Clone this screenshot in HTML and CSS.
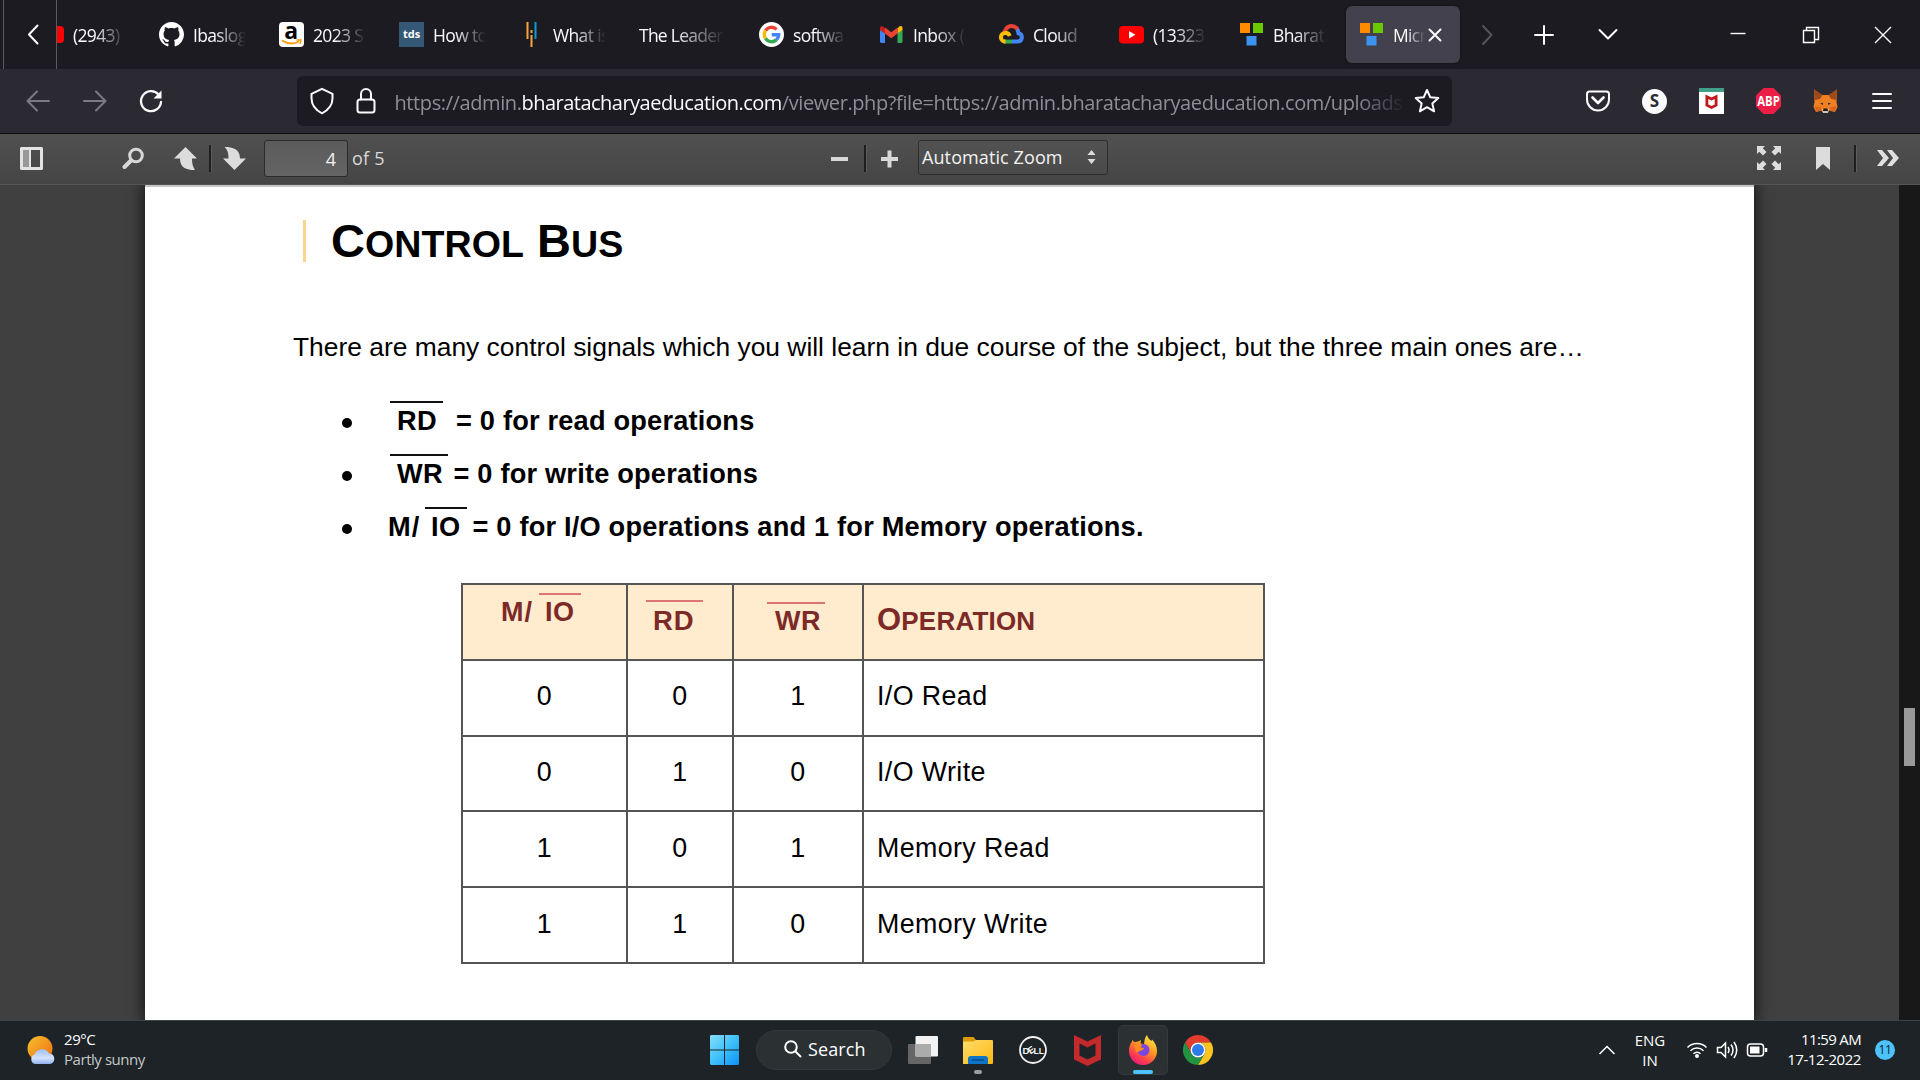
FILE: index.html
```html
<!DOCTYPE html>
<html lang="en">
<head>
<meta charset="utf-8">
<title>Control Bus</title>
<link rel="stylesheet" href="styles.css">
</head>
<body>
<header class="tabstrip">
  <div class="scroll-left"><svg width="14" height="22" viewBox="0 0 14 22" class="ln"><path d="M11.500 1.500 3 10.500 11.500 19.500"/></svg></div>
  <div class="tabs">
    <div class="tab"><svg class="fav" viewBox="0 0 25 25"><rect y="4" width="25" height="17" rx="4" fill="#f00"/></svg><span class="label">(2943)</span></div>
    <div class="tab"><svg class="fav" viewBox="0 0 16 16"><path fill="#fff" d="M8 0C3.580 0 0 3.580 0 8c0 3.540 2.290 6.530 5.470 7.590.4.070.55-.17.55-.38 0-.19-.01-.82-.01-1.490-2.010.37-2.530-.49-2.690-.94-.09-.23-.48-.94-.82-1.130-.28-.15-.68-.52-.01-.53.63-.01 1.080.58 1.230.82.72 1.210 1.870.87 2.330.66.070-.52.28-.87.51-1.070-1.780-.2-3.640-.89-3.640-3.950 0-.87.31-1.590.82-2.150-.08-.2-.36-1.020.08-2.120 0 0 .67-.21 2.200.82.64-.18 1.320-.27 2-.27s1.360.09 2 .27c1.530-1.040 2.200-.82 2.200-.82.44 1.100.16 1.920.08 2.120.51.56.82 1.270.82 2.150 0 3.070-1.870 3.750-3.650 3.950.29.25.54.73.54 1.480 0 1.070-.01 1.930-.01 2.200 0 .21.15.46.55.38A8.010 8.010 0 0 0 16 8c0-4.420-3.580-8-8-8z"/></svg><span class="label">Ibaslog</span></div>
    <div class="tab"><svg class="fav" viewBox="0 0 25 25"><rect width="25" height="25" rx="4" fill="#fff"/><text x="5.200" y="16.500" class="amz">a</text><path d="M3 18.500q8.500 5.500 17 1" fill="none" stroke="#f90" stroke-width="1.800"/><path d="M17.500 18h4.500l-1 4" fill="none" stroke="#f90" stroke-width="1.400"/></svg><span class="label">2023 S</span></div>
    <div class="tab"><svg class="fav" viewBox="0 0 25 25"><rect width="25" height="25" fill="#355876"/><text x="12.500" y="16" text-anchor="middle" class="tds">tds</text></svg><span class="label">How to</span></div>
    <div class="tab"><svg class="fav" viewBox="0 0 25 25"><path d="M8.500 0v17M12.500 13v12" stroke="#f3a73b" stroke-width="2"/><path d="M12.500 8v3" stroke="#f3a73b" stroke-width="2"/><path d="M16.500 0v17" stroke="#0e9bd0" stroke-width="2"/></svg><span class="label">What is</span></div>
    <div class="tab"><span class="label wide">The Leader</span></div>
    <div class="tab"><svg class="fav" viewBox="0 0 25 25"><circle cx="12.500" cy="12.500" r="12.500" fill="#fff"/><g fill="none" stroke-width="3.400"><path d="M6.500 8.600A7.200 7.200 0 0 1 17.600 7.400" stroke="#ea4335"/><path d="M6.500 16.400a7.200 7.200 0 0 1 0-7.800" stroke="#fbbc05"/><path d="M17.300 17.900A7.200 7.200 0 0 1 6.500 16.400" stroke="#34a853"/><path d="M12.700 12.700h7a7.200 7.200 0 0 1-2.400 5.200" stroke="#4285f4"/></g></svg><span class="label">softwa</span></div>
    <div class="tab"><svg class="fav" viewBox="0 0 25 25"><path fill="#4285f4" d="M1 8v11.500q0 1.500 1.500 1.500H6V11z"/><path fill="#34a853" d="M18.500 11v10H22q1.500 0 1.500-1.500V8z"/><path fill="#fbbc04" d="M18.500 6.500V11.500L23.500 8V6c0-2-2.300-2.500-3.500-1.200z"/><path fill="#ea4335" d="M6 11.500v-6l6.300 4.800 6.200-4.800v6l-6.200 4.700z"/><path fill="#c5221f" d="M1 6v2l5 3.500v-5L4.500 4.800C3.200 3.700 1 4.300 1 6z"/></svg><span class="label">Inbox (</span></div>
    <div class="tab"><svg class="fav" viewBox="0 0 25 25"><g fill="none" stroke-width="4"><path d="M5.500 10Q7.500 4 12.500 4q4.500 0 6.500 4.500" stroke="#ea4335"/><path d="M18 7.500q1.500 1.500 1.500 3.700a4.200 4.200 0 0 1-.6 8.300H13" stroke="#4285f4"/><path d="M13 19.600H5" stroke="#34a853"/><path d="M6.500 19.600A4.200 4.200 0 0 1 6 11q3.500-.6 4.800 3" stroke="#fbbc05"/></g></svg><span class="label">Cloud</span></div>
    <div class="tab"><svg class="fav" viewBox="0 0 25 25"><rect y="4" width="25" height="17.500" rx="4" fill="#f00"/><path d="M10 9v7.500l6.500-3.700z" fill="#fff"/></svg><span class="label">(13323</span></div>
    <div class="tab"><svg class="fav" viewBox="0 0 25 25"><path fill="#ff8c00" d="M1 1h10v10H1z"/><path fill="#6bc800" d="M14 1h10v10H14z"/><path fill="#3d94f0" d="M7.500 14h10v9.500h-10z"/></svg><span class="label">Bharat</span></div>
    <div class="tab active"><svg class="fav" viewBox="0 0 25 25"><path fill="#ff8c00" d="M1 1h10v10H1z"/><path fill="#6bc800" d="M14 1h10v10H14z"/><path fill="#3d94f0" d="M7.500 14h10v9.500h-10z"/></svg><span class="label short">Micr</span><svg class="ln" width="14" height="14" viewBox="0 0 14 14"><path d="M1.500 1.500l11 11M12.500 1.500l-11 11"/></svg></div>
  </div>
  <svg class="ln t-next" width="30" height="22" viewBox="0 0 30 22"><path d="M11 2l8.500 9L11 20"/></svg>
  <svg class="ln t-new" width="24" height="24" viewBox="0 0 24 24"><path d="M12 3v18M3 12h18"/></svg>
  <svg class="ln t-list" width="24" height="24" viewBox="0 0 24 24"><path d="M3.500 7l8.500 8.500L20.500 7"/></svg>
  <svg class="thin t-min" width="20" height="20" viewBox="0 0 20 20"><path d="M2.500 8.500h15"/></svg>
  <svg class="thin t-max" width="20" height="20" viewBox="0 0 20 20"><path d="M2.500 5.500h11v12h-11zM5.500 5.500v-3h12v12h-4"/></svg>
  <svg class="thin t-close" width="20" height="20" viewBox="0 0 20 20"><path d="M2 2l16 16M18 2L2 18"/></svg>
</header>

<nav class="navbar">
  <svg class="ln dim n-back" width="24" height="24" viewBox="0 0 24 24"><path d="M23 12H1.500M11 2.500L1.500 12l9.500 9.500"/></svg>
  <svg class="ln dim n-fwd" width="24" height="24" viewBox="0 0 24 24"><path d="M1 12h21.500M13 2.500l9.500 9.500-9.500 9.500"/></svg>
  <svg class="ln n-reload" width="24" height="24" viewBox="0 0 24 24"><path d="M19.500 5.500A10 10 0 1 0 22 13" stroke-width="2.300"/><path d="M22.500 1.500v8h-8z" fill="#fbfbfe" stroke="none"/></svg>
  <div class="urlbar">
    <svg class="ln u-shield" width="26" height="28" viewBox="0 0 26 28"><path d="M13 1.800l10.500 5v4.500c0 6.500-3.500 11.500-10.500 15C6 22.800 2.500 17.800 2.500 11.300V6.800z"/></svg>
    <svg class="ln u-lock" width="22" height="28" viewBox="0 0 22 28"><rect x="2.500" y="12.500" width="17" height="13" rx="2.500"/><path d="M6 12.500V7a5 5 0 0 1 10 0v5.500"/></svg>
    <span class="url">https://admin.<b>bharatacharyaeducation.com</b>/viewer.php?file=https://admin.bharatacharyaeducation.com/uploads</span>
    <svg class="ln u-star" width="26" height="26" viewBox="0 0 26 26"><path d="M13 2l3.300 7.300 8 .8-6 5.300 1.800 7.900L13 19.200l-7.100 4.100 1.800-7.900-6-5.300 8-.8z"/></svg>
  </div>
  <svg class="ln n-pocket" width="26" height="26" viewBox="0 0 26 26"><path d="M4.500 3.500h17q2.500 0 2.500 2.500v5.500a11 11 0 0 1-22 0V6q0-2.500 2.500-2.500z"/><path d="M7.500 9.500l5.500 5.500 5.500-5.500" stroke-width="2.600"/></svg>
  <svg class="n-s" width="25" height="25" viewBox="0 0 25 25"><circle cx="12.500" cy="12.500" r="12.500" fill="#fbfbfe"/><text x="12.500" y="18.300" text-anchor="middle" class="s-txt">S</text></svg>
  <svg class="n-ext" width="25" height="26" viewBox="0 0 25 26"><path fill="#fff" d="M0 0h25v26H0z"/><path fill="#3fa085" d="M0 0h25v4H0z"/><path fill="#c01818" d="M6.500 6.500l6 3 6-3v11.500l-6 3-6-3zM9.300 11v5.400l3.200 1.500 3.200-1.500V11l-3.200 1.600z"/></svg>
  <svg class="n-ext" width="25" height="26" viewBox="0 0 25 26"><path fill="#ed1e45" d="M7.500 0h10L25 7.500v11L17.500 26h-10L0 18.500v-11z"/><text x="12.500" y="17.800" text-anchor="middle" textLength="22.500" lengthAdjust="spacingAndGlyphs" class="abp">ABP</text></svg>
  <svg class="n-ext" width="25" height="25" viewBox="0 0 25 25"><path fill="#f08021" d="M1 1l8 5h7l8-5-.5 12 1 5-2.500 5-6-1.500-2 2h-4l-2-2L3 23 .5 18l1-5z"/><path fill="#9c4a1c" d="M1 0l8.500 6L7 10l-5.500 1zM24 0l-8.500 6L18 10l5.500 1z"/><path fill="#d8661c" d="M2 17l6 1.500L8 22l-5 .5zM23 17l-6 1.500.5 3.500 4.500.5z"/><path fill="#26303a" d="M7 14.500l3-.8v2.300zM18 14.500l-3-.8v2.300z"/><path fill="#d9c0ac" d="M9 20h7l-1 4h-5z"/><path fill="#1b1b20" d="M10.500 19.500h4l.5 2.500h-5z"/></svg>
  <svg class="ln n-menu" width="20" height="20" viewBox="0 0 20 20"><path d="M1 3h18M1 10h18M1 17h18"/></svg>
</nav>

<div class="pdfbar">
  <svg class="p-side" width="23" height="23" viewBox="0 0 23 23"><path fill="#e2e2e2" fill-rule="evenodd" d="M1 0h21l1 1v21l-1 1H1l-1-1V1zM3.500 3v17h5V3zM11 3v17h9V3z"/><path fill="#999" d="M3.500 3h5v17h-5z"/></svg>
  <svg class="p-find" width="23" height="23" viewBox="0 0 23 23"><circle cx="14" cy="8.500" r="6.300" fill="none" stroke="#d8d8d8" stroke-width="3"/><path d="M9 13.500l-6.500 6.500" stroke="#d8d8d8" stroke-width="4" stroke-linecap="round"/></svg>
  <svg class="p-up" width="23" height="23" viewBox="0 0 23 23"><path fill="#dcdcdc" d="M11.500 0L23 11.500h-5c0 4 .5 8 3 11.500-9 0-15-2-15-11.500H0z"/></svg>
  <i class="sep p-sep1"></i>
  <svg class="p-down" width="23" height="23" viewBox="0 0 23 23"><path fill="#dcdcdc" d="M11.500 23L0 11.500h5.500C5.500 7 5 3 1.500 0 10 0 17 2 17 11.500h6z"/></svg>
  <div class="pagenum">4</div>
  <span class="of">of 5</span>
  <svg class="p-minus" width="19" height="19" viewBox="0 0 19 19"><path fill="#d8d8d8" d="M1 8h17v4H1z"/></svg>
  <i class="sep p-sep2"></i>
  <svg class="p-plus" width="19" height="19" viewBox="0 0 19 19"><path fill="#d8d8d8" d="M1 8h17v4H1zM7.500 1.500h4v17h-4z"/></svg>
  <div class="zoom"><span>Automatic Zoom</span><svg width="9" height="14" viewBox="0 0 9 14"><path fill="#ddd" d="M4.500 0L8.500 5h-8zM4.500 14L.5 9h8z"/></svg></div>
  <svg class="p-full" width="24" height="24" viewBox="0 0 24 24"><g fill="#dcdcdc"><path d="M0 0h8L5.800 2.300 9.500 6 6 9.500 2.300 5.800 0 8z"/><path d="M24 0v8l-2.300-2.200L18 9.500 14.500 6l3.700-3.700L16 0zM24 24h-8l2.200-2.300-3.700-3.700 3.500-3.500 3.700 3.700L24 16zM0 24v-8l2.300 2.200L6 14.500 9.500 18l-3.700 3.700L8 24z"/></g></svg>
  <svg class="p-mark" width="14" height="23" viewBox="0 0 14 23"><path fill="#dcdcdc" d="M0 0h14v23l-7-6-7 6z"/></svg>
  <i class="sep p-sep3"></i>
  <svg class="p-more" width="24" height="18" viewBox="0 0 24 18"><path fill="#e0e0e0" d="M1 1h5l7 8-7 8H1l6-8zM11 1h5l7 8-7 8h-5l6-8z"/></svg>
</div>

<main class="viewer">
  <article class="page">
    <h1><i></i><span>C<small>ONTROL</small> B<small>US</small></span></h1>
    <p>There are many control signals which you will learn in due course of the subject, but the three main ones are…</p>
    <ul>
      <li><span class="ov rd">RD</span><span class="eq-rd">= 0 for read operations</span></li>
      <li><span class="ov wr">WR</span><span class="eq">= 0 for write operations</span></li>
      <li><span class="m">M/</span><span class="ov io">IO</span><span class="eq">= 0 for I/O operations and 1 for Memory operations.</span></li>
    </ul>
    <table>
      <thead><tr>
        <th class="c1"><div class="h h1"><span class="hm">M/</span><span class="ov">IO</span></div></th>
        <th class="c2"><div class="h h2"><span class="ov">RD</span></div></th>
        <th class="c3"><div class="h h3"><span class="ov">WR</span></div></th>
        <th class="c4"><div class="h h4">O<small>PERATION</small></div></th>
      </tr></thead>
      <tbody>
        <tr><td>0</td><td>0</td><td>1</td><td>I/O Read</td></tr>
        <tr><td>0</td><td>1</td><td>0</td><td>I/O Write</td></tr>
        <tr><td>1</td><td>0</td><td>1</td><td>Memory Read</td></tr>
        <tr><td>1</td><td>1</td><td>0</td><td>Memory Write</td></tr>
      </tbody>
    </table>
  </article>
  <div class="scrollbar"><div class="thumb"></div></div>
</main>

<footer class="taskbar">
  <svg class="k-sun" width="28" height="28" viewBox="0 0 28 28"><defs><linearGradient id="sun" x1="0" y1="0" x2="1" y2="1"><stop offset="0" stop-color="#f6c02c"/><stop offset="1" stop-color="#ef6c13"/></linearGradient><linearGradient id="cl" x1="0" y1="0" x2="0" y2="1"><stop offset="0" stop-color="#9fc0f5"/><stop offset=".6" stop-color="#d5e3fb"/><stop offset="1" stop-color="#8fb0ee"/></linearGradient></defs><circle cx="13" cy="12.500" r="12.500" fill="url(#sun)"/><path d="M8 28a5 5 0 0 1-.5-9.500 8 8 0 0 1 14.500-1A5.300 5.300 0 0 1 23 28z" fill="url(#cl)"/></svg>
  <div class="weather"><span>29°C</span><span class="sub">Partly sunny</span></div>
  <svg class="k-win" width="29" height="30" viewBox="0 0 29 30"><defs><linearGradient id="w" x1="0" y1="0" x2="1" y2="1"><stop offset="0" stop-color="#88dcfb"/><stop offset=".5" stop-color="#3fc1fb"/><stop offset="1" stop-color="#0a93f5"/></linearGradient></defs><path fill="url(#w)" d="M1 0h13v14.500H0V1zM15 0h13l1 1v13.500H15zM0 15.500h14V30H1l-1-1zM15 15.500h14V29l-1 1H15z"/></svg>
  <div class="search"><svg width="18" height="18" viewBox="0 0 18 18"><circle cx="7" cy="7" r="5.800"/><path d="M11.500 11.500L17 17"/></svg><span>Search</span></div>
  <svg class="k-view" width="30" height="28" viewBox="0 0 30 28"><rect y="8" width="23" height="20" rx="1" fill="#666"/><rect x="7.500" width="22.500" height="20.500" rx="1" fill="#f2f2f2"/><path fill="#ababab" d="M7.500 8H23v12.500H7.500z"/></svg>
  <div class="app k-files"><svg width="30" height="28" viewBox="0 0 30 28"><defs><linearGradient id="f" x1="0" y1="0" x2="1" y2="1"><stop offset="0" stop-color="#ffdc6b"/><stop offset="1" stop-color="#fbb90f"/></linearGradient></defs><path fill="#dc9a06" d="M0 2q0-1 1-1h9.500L13 4l-2 4H0z"/><path fill="url(#f)" d="M0 5.500h10L13 4h16q1 0 1 1v22q0 1-1 1H0z"/><path fill="#0f74c6" d="M5 28v-5q0-3 3-3h14q3 0 3 3v5z"/><path stroke="#064d8c" stroke-width="1.500" d="M9 24h12"/></svg><i class="dot"></i></div>
  <svg class="k-dell" width="28" height="28" viewBox="0 0 28 28"><circle cx="14" cy="14" r="13" fill="none" stroke="#f0f0f0" stroke-width="1.800"/><text x="3.400" y="17.500" class="dell">D</text><text x="9" y="17.300" class="dell" transform="rotate(-35 12 14)">E</text><text x="14.600" y="17.500" textLength="10.500" lengthAdjust="spacingAndGlyphs" class="dell">LL</text></svg>
  <svg class="k-mc" width="27" height="31" viewBox="0 0 27 31"><path fill="#c22a2b" d="M0 0l13.500 6.500L27 0v24.500L13.500 31 0 24.500zM5.500 8.500V20.500l8 4 8-4V8.500l-8 4z"/></svg>
  <div class="app k-fox"><svg width="28" height="30" viewBox="0 0 28 30"><defs><linearGradient id="x" x1=".8" y1="0" x2=".2" y2="1"><stop offset="0" stop-color="#fff04a"/><stop offset=".4" stop-color="#ff9a1f"/><stop offset=".75" stop-color="#ff3a4f"/><stop offset="1" stop-color="#e3158b"/></linearGradient></defs><path fill="url(#x)" d="M18 0c1 3.500 2.500 4.500 4.500 6l.5-1.500C26.500 8 28 12 28 16a14 14 0 0 1-28 0c0-4 1-7 3-9.500V5L5.500 7 9 6.500 12 5l-.5 3.500 3.500.5C15.500 5 16 2 18 0z"/><circle cx="14.500" cy="15" r="6" fill="#7a45e0"/><path fill="#ff8a1e" d="M5 9.500l8 .5-1.500 2.500 3.500.5c-1 3-4 2.500-5 3.500l-3 1z"/></svg><i class="dot on"></i></div>
  <svg class="k-chrome" width="30" height="30" viewBox="0 0 30 30"><path fill="#e33b2e" d="M15 0a15 15 0 0 1 13 7.500H15A7.500 7.500 0 0 0 8.500 18.700L2 7.500A15 15 0 0 1 15 0z"/><path fill="#fcc31e" d="M28 7.500A15 15 0 0 1 15 30l6.500-11.300A7.500 7.500 0 0 0 15 7.500z"/><path fill="#229342" d="M2 7.500l6.500 11.200A7.500 7.500 0 0 0 21.500 18.700L15 30A15 15 0 0 1 2 7.500z"/><circle cx="15" cy="15" r="7.500" fill="#fff"/><circle cx="15" cy="15" r="6" fill="#2f7bea"/></svg>
  <svg class="tray k-up" width="18" height="12" viewBox="0 0 18 12"><path d="M1.500 10L9 2.500 16.500 10"/></svg>
  <div class="lang"><span>ENG</span><span>IN</span></div>
  <svg class="tray k-wifi" width="22" height="18" viewBox="0 0 22 18"><path d="M1.500 6.500a13.500 13.500 0 0 1 19 0M4.500 9.800a9.200 9.200 0 0 1 13 0M7.500 12.800a5 5 0 0 1 7 0"/><circle cx="11" cy="15" r="2" fill="#fff" stroke="none"/></svg>
  <svg class="tray k-vol" width="22" height="18" viewBox="0 0 22 18"><path d="M1.500 6.500H5L9.500 2v14L5 11.500H1.500zM12 6q2 3 0 6M15 3.500q4 5.500 0 11M18 1q5.500 8 0 16"/></svg>
  <svg class="tray k-bat" width="22" height="16" viewBox="0 0 22 16"><rect x="1.500" y="2" width="16" height="12" rx="3"/><path d="M4 4.500h9.500v7H4z" fill="#fff" stroke="none"/><path d="M20 6v4" stroke-width="2.500"/></svg>
  <div class="clock"><span class="time">11:59 AM</span><span>17-12-2022</span></div>
  <span class="badge">11</span>
</footer>
</body>
</html>
```
FILE: styles.css
```css
* { box-sizing: border-box; }
body { margin: 0; width: 1920px; height: 1080px; overflow: hidden; display: flex; flex-direction: column; background: #404040; font-family: "Open Sans", "Noto Sans", sans-serif; color: #fbfbfe; }
svg { display: block; flex: none; }
i { display: block; flex: none; }
.ln { fill: none; stroke: #fbfbfe; stroke-width: 2; stroke-linecap: round; stroke-linejoin: round; }
.thin { fill: none; stroke: #fff; stroke-width: 1.4; }
.dim { stroke: #7b7a82; }

/* tab strip */
.tabstrip { height: 69px; flex: none; display: flex; align-items: center; background: #1c1b22; }
.scroll-left { width: 54px; height: 69px; margin-left: 3px; border: solid #5b5a62; border-width: 0 1px; display: flex; align-items: center; padding-left: 22px; }
.tabs { width: 1406px; height: 69px; display: flex; justify-content: flex-end; overflow: hidden; }
.tab { width: 114px; height: 57px; margin: 6px 3px; padding-left: 13px; flex: none; display: flex; align-items: center; border-radius: 6px; }
.tab.active { background: #42414d; box-shadow: 0 0 3px #0008; }
.fav { width: 25px; height: 25px; }
.label { width: 54px; margin-left: 9px; overflow: hidden; white-space: nowrap; font-size: 17.5px; line-height: 26px; padding-top: 1px; letter-spacing: -.65px; -webkit-mask-image: linear-gradient(90deg, #000 40%, transparent 98%); mask-image: linear-gradient(90deg, #000 40%, transparent 98%); }
.label.wide { width: 88px; margin-left: 0; letter-spacing: -.75px; }
.label.short { width: 33px; margin-right: 2px; }
.amz { font: bold 23px "Open Sans", sans-serif; fill: #000; }
.tds { font: bold 11px "Open Sans", sans-serif; fill: #fff; }
.t-next { margin-left: 9px; opacity: .25; }
.t-new { margin-left: 29.5px; }
.t-list { margin-left: 40px; }
.t-min { margin-left: 108.5px; }
.t-max { margin-left: 53px; }
.t-close { margin-left: 51.5px; }

/* navigation bar */
.navbar { height: 65px; flex: none; display: flex; align-items: center; background: #2b2a33; border-bottom: 1px solid #0c0c0d; }
.n-back { margin-left: 26px; }
.n-fwd { margin-left: 33px; }
.n-reload { margin-left: 32px; }
.urlbar { width: 1155px; height: 50px; margin-left: 134px; display: flex; align-items: center; background: #1c1b22; border-radius: 6px; }
.u-shield { margin-left: 12px; }
.u-lock { margin-left: 20px; }
.url { width: 1011px; margin-left: 17.5px; overflow: hidden; white-space: nowrap; font-size: 20px; line-height: 30px; letter-spacing: -.4px; color: #8f8e95; padding-top: 4px; -webkit-mask-image: linear-gradient(90deg, #000 95%, transparent); mask-image: linear-gradient(90deg, #000 95%, transparent); }
.url b { font-weight: 400; color: #fbfbfe; letter-spacing: -.52px; }
.u-star { margin-left: 8.5px; }
.n-pocket { margin-left: 133px; }
.n-s { margin-left: 31px; }
.n-ext { margin-left: 32px; }
.n-menu { margin-left: 34px; }
.s-txt { font: bold 17px "Open Sans", sans-serif; fill: #2b2a33; }
.abp { font: bold 14px "Open Sans", sans-serif; fill: #fff; }

/* PDF toolbar */
.pdfbar { height: 51px; flex: none; display: flex; align-items: center; padding-bottom: 2px; background: linear-gradient(#505050, #454545); border-bottom: 1px solid #555; font-size: 18px; color: #d9d9d9; }
.p-side { margin-left: 20px; }
.p-find { margin-left: 79px; }
.p-up { margin-left: 29px; }
.sep { width: 3px; height: 27px; background: #1e1e1e; border-right: 1px solid #5c5c5c; }
.p-sep1 { margin-left: 12px; }
.p-down { margin-left: 11px; }
.pagenum { width: 84px; height: 37px; margin-left: 18px; padding-right: 11px; text-align: right; line-height: 37px; border: 1px solid #2b2b2b; border-radius: 3px; background: linear-gradient(#5b5b5b, #646464); color: #f2f2f2; }
.of { width: 34px; margin-left: 4px; letter-spacing: .2px; white-space: nowrap; }
.p-minus { margin-left: 444px; }
.p-sep2 { margin-left: 15px; }
.p-plus { margin-left: 13px; }
.zoom { width: 190px; height: 35px; margin: -2px 0 0 19px; padding: 0 11px 0 3px; display: flex; align-items: center; justify-content: space-between; border: 1px solid #2e2e2e; border-radius: 3px; background: linear-gradient(#525252, #4a4a4a); color: #f2f2f2; white-space: nowrap; letter-spacing: .1px; }
.p-full { margin-left: 649px; }
.p-mark { margin-left: 35px; }
.p-sep3 { margin-left: 24px; }
.p-more { margin-left: 18.5px; }

/* document */
.viewer { height: 835px; flex: none; display: flex; background: #404040; font-family: "Liberation Sans", Arial, sans-serif; overflow: hidden; }
.page { width: 1609px; height: 835px; margin-left: 145px; padding-top: 25px; background: #fff; color: #000; border-top: 2px solid #c6c6c6; box-shadow: 0 0 14px 2px #000a; flex: none; }
.scrollbar { width: 21px; margin-left: auto; background: #181818; padding: 523px 0 0 5px; }
.thumb { width: 11px; height: 58px; background: #999; }
h1 { margin: 0; height: 60px; padding-left: 158px; display: flex; align-items: center; font-size: 47px; line-height: 60px; white-space: nowrap; letter-spacing: .05px; }
h1 i { width: 3px; height: 42px; background: #fdd58a; margin: -2px 25px 0 0; }
h1 small { font-size: 37.6px; }
p { margin: 55px 0 27px 148px; font-size: 26.4px; line-height: 40px; letter-spacing: 0; white-space: nowrap; }
ul { list-style: none; margin: 0; padding: 0; font-size: 27.2px; font-weight: bold; letter-spacing: .2px; }
li { height: 53px; display: flex; align-items: flex-start; line-height: 54px; white-space: nowrap; }
li::before { content: ""; width: 10px; height: 10px; margin: 24px 38px 0 197px; border-radius: 50%; background: #000; }
.ov { display: block; border-top: 2px solid #111; line-height: 36px; letter-spacing: .4px; }
li .ov { margin-top: 7px; }
.rd { width: 53px; padding-left: 7px; }
.wr { width: 58px; padding-left: 7px; }
.io { width: 42px; padding-left: 6px; }
.m { width: 37px; margin-left: -2px; letter-spacing: 1px; }
.eq-rd { margin-left: 13px; }
.eq { margin-left: 5.5px; }
table { width: 804px; margin: 30px 0 0 316px; border-collapse: collapse; table-layout: fixed; font-size: 26.8px; letter-spacing: .4px; }
th, td { border: 2px solid #555; padding: 0; height: 75.8px; }
.c1 { width: 165px; }
.c2 { width: 106px; }
.c3 { width: 130px; }
th { background: #ffebcd; color: #7b2a28; vertical-align: top; text-align: left; }
th .ov { border-color: #dd7672; line-height: 35px; }
td { text-align: center; line-height: 30px; padding-bottom: 3px; }
td:last-child { text-align: left; padding-left: 13px; }
.h { display: flex; align-items: flex-start; height: 70px; font-size: 27px; }
.h1 { padding: 8px 0 0 38px; }
.hm { width: 38px; line-height: 35px; margin-top: 2px; letter-spacing: 1px; }
.h1 .ov { width: 42px; padding-left: 6px; }
.h2 { padding: 15px 0 0 18px; }
.h2 .ov { width: 57px; padding-left: 7px; line-height: 37px; font-size: 27.5px; letter-spacing: 1px; }
.h3 { padding: 17px 0 0 33px; }
.h3 .ov { width: 58px; padding-left: 8px; }
.h4 { padding: 15px 0 0 13px; font-size: 31px; line-height: 40px; align-items: baseline; letter-spacing: .2px; }
.h4 small { font-size: 26px; }

/* taskbar */
.taskbar { height: 60px; flex: none; display: flex; align-items: center; padding-bottom: 1px; background: #1d2326; border-top: 1px solid #3d4244; font-size: 15px; line-height: 20px; color: #fff; letter-spacing: -.45px; white-space: nowrap; }
.k-sun { margin-left: 27px; }
.weather { width: 90px; margin: -3px 0 0 9px; display: flex; flex-direction: column; }
.sub { color: #c6c8c9; }
.k-win { margin-left: 556px; }
.search { width: 136px; height: 40px; margin-left: 17px; padding: 0 0 2px 27px; display: flex; align-items: center; gap: 6px; border-radius: 20px; background: #2b3033; border: 1px solid #33383a; font-size: 18px; letter-spacing: .1px; }
.search svg { fill: none; stroke: #fff; stroke-width: 2; }
.k-view { margin-left: 16px; }
.app { display: flex; align-items: center; justify-content: center; height: 50px; position: relative; }
.k-files { width: 30px; margin-left: 25px; }
.k-dell { margin-left: 26px; }
.dell { font: bold 9.5px "Liberation Sans", sans-serif; fill: #f4f4f4; letter-spacing: 0; }
.k-mc { margin-left: 27px; }
.k-fox { width: 50px; margin-left: 17px; background: #2b3033; border-radius: 5px; border: 1px solid #34393b; }
.dot { position: absolute; bottom: 1px; left: 11px; width: 8px; height: 4px; border-radius: 2px; background: #9a9d9e; }
.dot.on { left: 14px; bottom: 0; width: 20px; background: #4cc2ff; }
.k-chrome { margin-left: 15px; }
.tray { fill: none; stroke: #fff; stroke-width: 1.5; }
.k-up { margin-left: 385px; }
.lang { width: 40px; margin: -1px 0 0 14px; display: flex; flex-direction: column; align-items: center; letter-spacing: 0; }
.k-wifi { margin-left: 16px; }
.k-vol { margin-left: 8px; }
.k-bat { margin-left: 8px; }
.clock { width: 83px; margin: -3px 0 0 10px; display: flex; flex-direction: column; align-items: flex-end; }
.time { letter-spacing: -.65px; }
.badge { width: 20px; height: 20px; margin-left: 14px; border-radius: 50%; background: #4cc2ff; color: #10202a; font-size: 12px; text-align: center; }
```
